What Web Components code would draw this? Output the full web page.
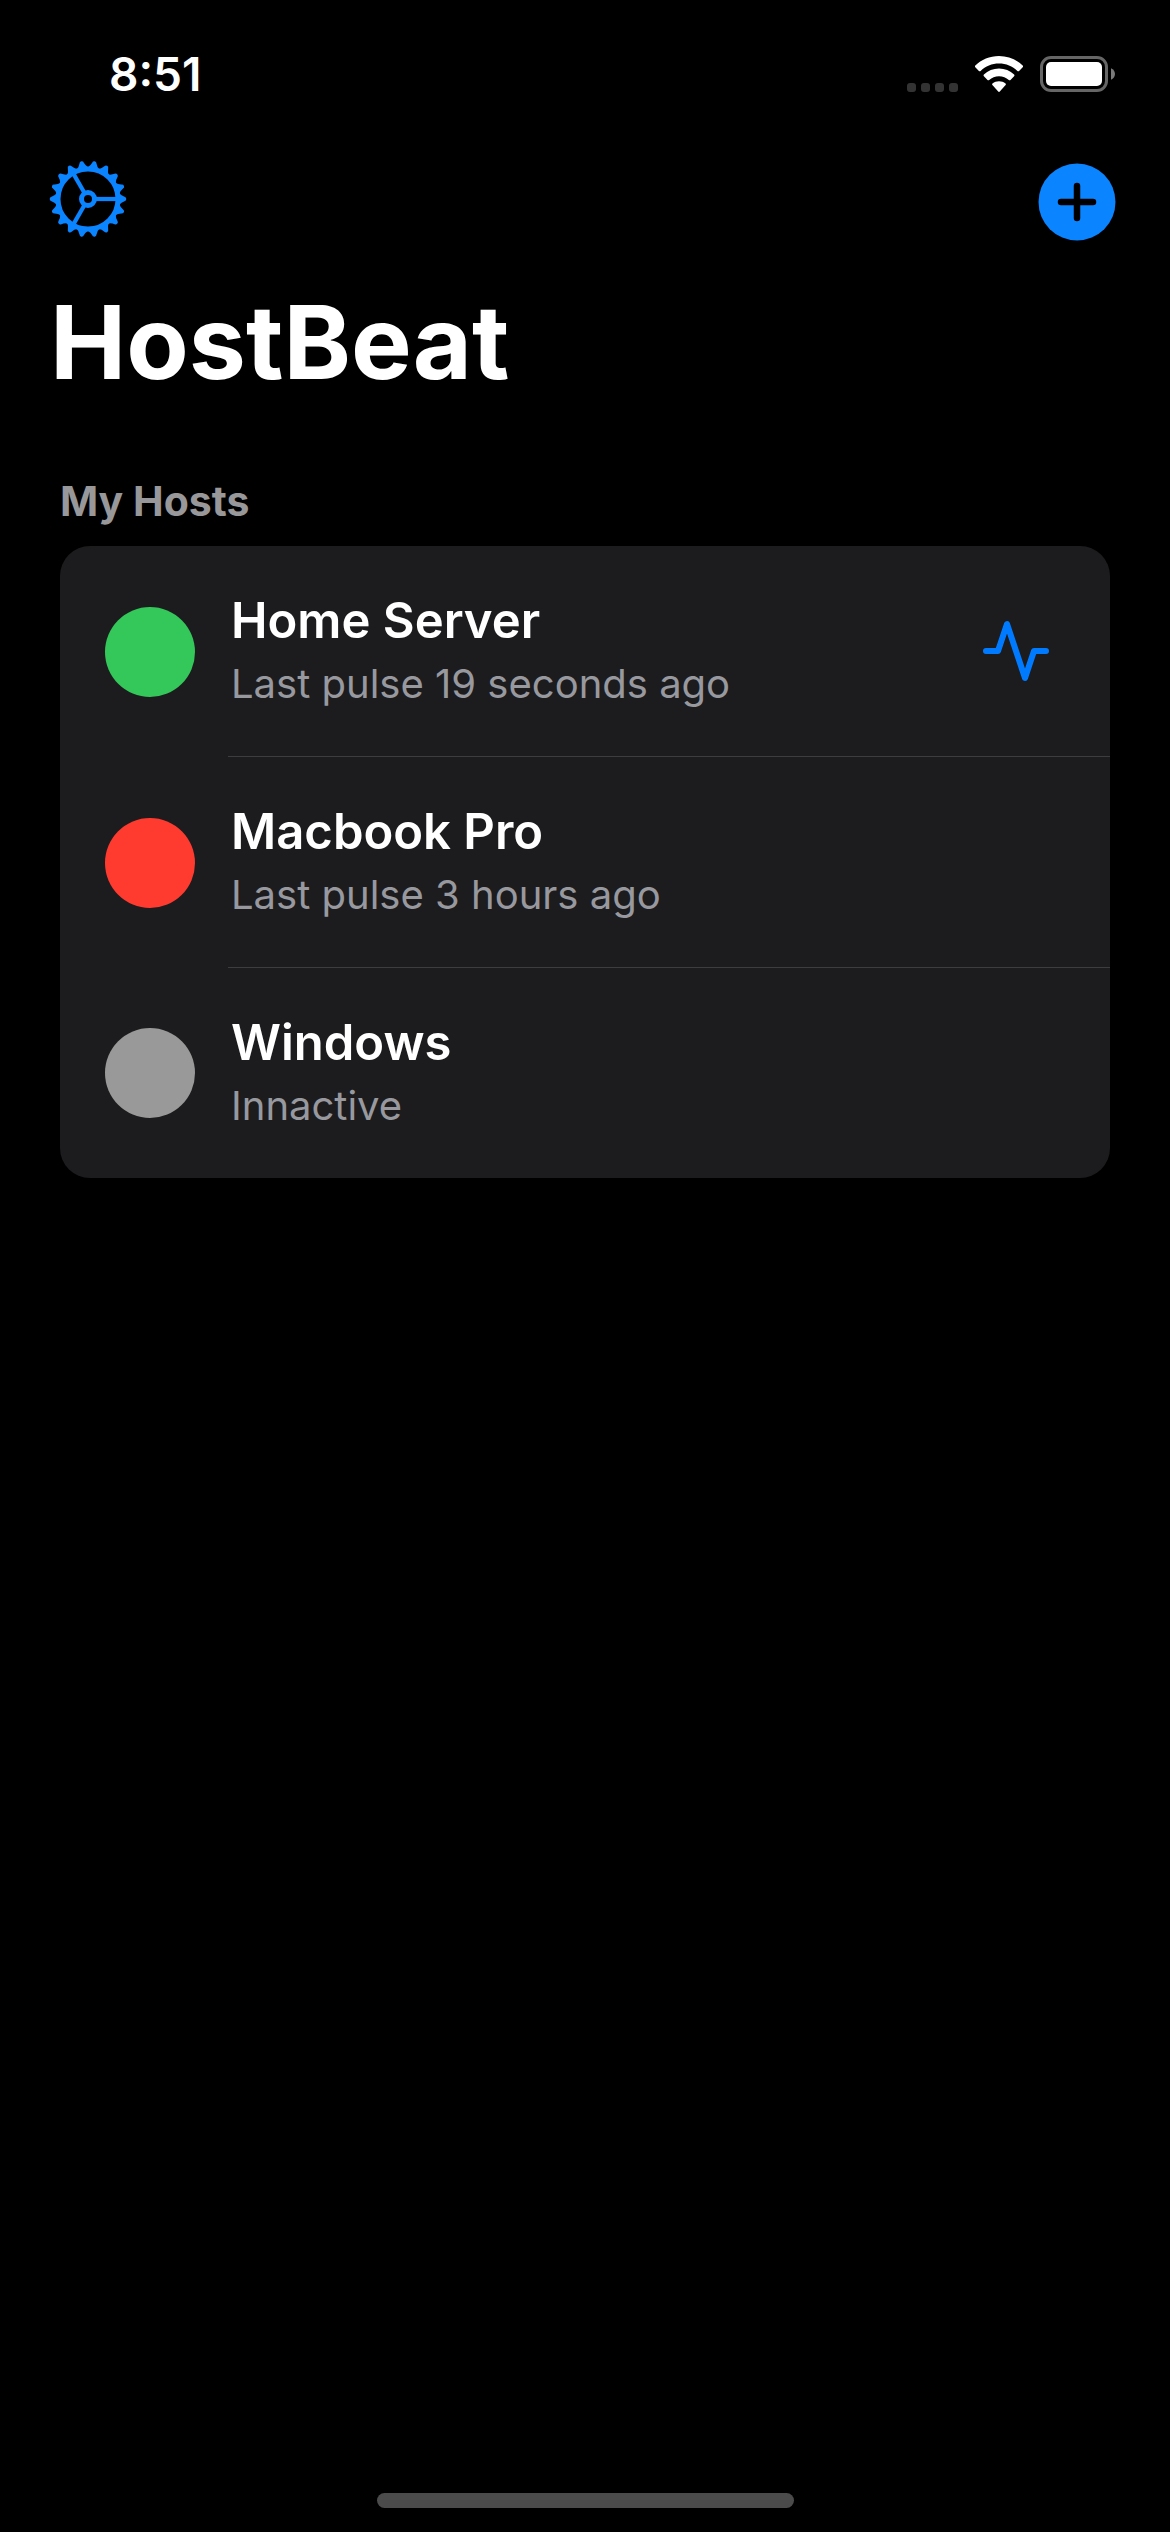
<!DOCTYPE html>
<html lang="en">
<head>
<meta charset="utf-8">
<meta name="viewport" content="width=device-width, initial-scale=1">
<title>HostBeat</title>
<style>
  html, body { margin: 0; background: #000; }
  body { font-family: Inter, "Liberation Sans", sans-serif; color: #fff; }
</style>
</head>
<body>
<host-app>
  <status-bar slot="status" time="8:51"></status-bar>
  <nav-bar slot="nav"></nav-bar>
  <span slot="title">HostBeat</span>
  <host-section>
    <span slot="heading">My Hosts</span>
    <host-row status="online" pulse><span slot="name">Home Server</span><span slot="detail">Last pulse 19 seconds ago</span></host-row>
    <host-row status="offline"><span slot="name">Macbook Pro</span><span slot="detail">Last pulse 3 hours ago</span></host-row>
    <host-row status="inactive" last><span slot="name">Windows</span><span slot="detail">Innactive</span></host-row>
  </host-section>
</host-app>

<script>
class BaseElement extends HTMLElement {
  constructor() {
    super();
    this.attachShadow({ mode: "open" });
  }
  connectedCallback() {
    this.shadowRoot.innerHTML = this.render();
  }
}

const buttonReset = `
  button { display: block; margin: 0; padding: 0; border: 0; background: none; color: inherit; font: inherit; cursor: pointer; }
  svg { display: block; }
`;

customElements.define("status-bar", class extends BaseElement {
  render() {
    return `
      <style>
        :host { display: flex; justify-content: space-between; align-items: center; height: 148px; padding: 0 55px 0 109px; box-sizing: border-box; }
        time { font-size: 46px; line-height: 56px; font-weight: 600; }
        .icons { display: flex; align-items: center; gap: 17px; }
        svg { display: block; }
      </style>
      <time>${this.getAttribute("time")}</time>
      <div class="icons">
        <svg width="51" height="36" viewBox="0 0 51 36" fill="#333" aria-hidden="true">
          <rect x="0" y="27" width="9" height="9" rx="3"/><rect x="14" y="27" width="9" height="9" rx="3"/>
          <rect x="28" y="27" width="9" height="9" rx="3"/><rect x="42" y="27" width="9" height="9" rx="3"/>
        </svg>
        <svg width="48" height="36" viewBox="0 0 48 36" fill="#fff" aria-hidden="true">
          <path d="M24 0C33.3 0 41.7 3.6 47.7 9.5c.5.5.5 1.2 0 1.7l-3.6 3.7c-.5.5-1.2.5-1.7 0C37.6 10.3 31 7.6 24 7.6S10.4 10.3 5.6 14.9c-.5.5-1.2.5-1.7 0L.3 11.2c-.5-.5-.5-1.2 0-1.7C6.3 3.6 14.7 0 24 0z"/>
          <path d="M24 12.6c5.8 0 11.1 2.2 15.1 5.9.5.5.5 1.2 0 1.7l-3.6 3.7c-.5.5-1.2.5-1.7 0-2.6-2.3-6-3.7-9.8-3.7s-7.2 1.4-9.8 3.7c-.5.5-1.2.5-1.7 0l-3.6-3.7c-.5-.5-.5-1.2 0-1.7 4-3.7 9.3-5.9 15.1-5.9z"/>
          <path d="M24 25.2c2.5 0 4.7.9 6.5 2.3.5.4.5 1.1.1 1.6l-5.800 6.400c-.5.5-1.100.5-1.600 0l-5.800-6.400c-.4-.5-.4-1.200.1-1.600 1.800-1.400 4-2.300 6.500-2.300z"/>
        </svg>
        <svg width="75" height="36" viewBox="0 0 75 36" aria-hidden="true">
          <rect x="1.5" y="1.5" width="65" height="33" rx="9.5" fill="none" stroke="#666" stroke-width="3"/>
          <rect x="6" y="6" width="56" height="24" rx="5" fill="#fff"/>
          <path d="M71 12.200c2.400 1 4 3.200 4 5.800s-1.600 4.800-4 5.800z" fill="#7a7a7a"/>
        </svg>
      </div>`;
  }
});

customElements.define("nav-bar", class extends BaseElement {
  render() {
    const teeth = Array.from({ length: 18 }, (_, i) =>
      `<path d="M31-6Q33.5-3.2 36.5-2.2Q38.3-1.8 38.3 0Q38.3 1.8 36.5 2.2Q33.5 3.2 31 6z" transform="rotate(${i * 20})"/>`).join("");
    const spokes = [0, 120, 240].map(a => `<path d="M7 0H29" transform="rotate(${a})"/>`).join("");
    return `
      <style>
        :host { display: flex; justify-content: space-between; align-items: center; height: 108px; padding: 0 54px 0 49px; box-sizing: border-box; color: #0a84ff; }
        ${buttonReset}
      </style>
      <button type="button" aria-label="Settings">
        <svg width="78" height="84" viewBox="-39 -39 78 84">
          <g fill="currentColor">${teeth}</g>
          <g fill="none" stroke="currentColor">
            <circle r="30" stroke-width="5"/>
            <circle r="6.5" stroke-width="5"/>
            <g stroke-width="4.2">${spokes}</g>
          </g>
        </svg>
      </button>
      <button type="button" aria-label="Add host">
        <svg width="78" height="78" viewBox="0 0 78 78">
          <circle cx="39" cy="39" r="38.5" fill="currentColor"/>
          <path d="M23 39H55M39 23V55" stroke="#000" stroke-width="6.5" stroke-linecap="round"/>
        </svg>
      </button>`;
  }
});

customElements.define("host-section", class extends BaseElement {
  render() {
    return `
      <style>
        :host { display: block; padding: 0 60px; }
        h2 { margin: 0 0 20px; font-size: 41px; line-height: 50px; font-weight: 650; color: #98989a; }
        .card { background: #1c1c1e; border-radius: 30px; overflow: hidden; }
      </style>
      <h2><slot name="heading"></slot></h2>
      <div class="card" role="list"><slot></slot></div>`;
  }
});

customElements.define("host-row", class extends BaseElement {
  connectedCallback() {
    this.setAttribute("role", "listitem");
    super.connectedCallback();
  }
  render() {
    const pulse = this.hasAttribute("pulse") ? `
      <button type="button" aria-label="Send pulse">
        <svg width="72" height="72" viewBox="0 0 24 24" fill="none" stroke="#007aff" stroke-width="2" stroke-linecap="round" stroke-linejoin="round">
          <path d="M22 12H18L15 21 9 3 6 12H2"/>
        </svg>
      </button>` : "";
    return `
      <style>
        :host { display: flex; align-items: center; gap: 33px; padding-left: 45px; --dot: #999; }
        :host([status="online"]) { --dot: #34c759; }
        :host([status="offline"]) { --dot: #ff3b30; }
        .dot { flex: none; width: 90px; height: 90px; border-radius: 50%; background: var(--dot); }
        .body { flex: 1; display: flex; align-items: center; justify-content: space-between; height: 210px; padding: 0 58px 0 3px; border-bottom: 1px solid #3d3d41; }
        :host([last]) .body { border-bottom: 0; }
        .text { padding-top: 2px; }
        .name { font-size: 49px; line-height: 64px; font-weight: 600; }
        .detail { font-size: 40px; line-height: 62px; color: #98989f; }
        ${buttonReset}
      </style>
      <div class="dot"></div>
      <div class="body">
        <div class="text">
          <div class="name"><slot name="name"></slot></div>
          <div class="detail"><slot name="detail"></slot></div>
        </div>
        ${pulse}
      </div>`;
  }
});

customElements.define("host-app", class extends BaseElement {
  render() {
    return `
      <style>
        :host { display: flex; flex-direction: column; min-height: 100vh; background: #000; }
        main { flex: 1; }
        h1 { margin: 26px 0 74px; padding: 0 50px; font-size: 102px; line-height: 120px; font-weight: 700; }
        .home { align-self: center; width: 417px; max-width: 60%; height: 15px; margin-bottom: 24px; border-radius: 8px; background: #4b4b4b; }
      </style>
      <slot name="status"></slot>
      <slot name="nav"></slot>
      <main>
        <h1><slot name="title"></slot></h1>
        <slot></slot>
      </main>
      <div class="home"></div>`;
  }
});
</script>
</body>
</html>
